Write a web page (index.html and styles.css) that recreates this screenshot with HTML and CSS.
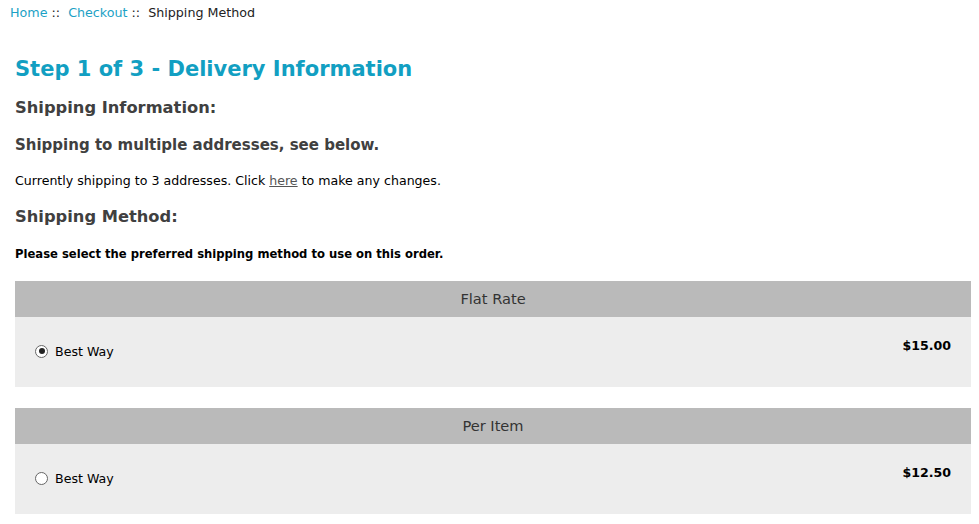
FILE: index.html
```html
<!DOCTYPE html>
<html>
<head>
<meta charset="utf-8">
<link rel="stylesheet" href="styles.css">
</head>
<body>
<div class="page">
  <div class="crumbs"><a href="#">Home</a>&nbsp;::&nbsp; <a href="#">Checkout</a>&nbsp;::&nbsp; Shipping Method</div>
  <h1 class="title">Step 1 of 3 - Delivery Information</h1>
  <h2 class="sub">Shipping Information:</h2>
  <h3 class="sub sub-small">Shipping to multiple addresses, see below.</h3>
  <p class="info">Currently shipping to 3 addresses. Click <a href="#" class="here">here</a> to make any changes.</p>
  <h2 class="sub sub-method">Shipping Method:</h2>
  <p class="note">Please select the preferred shipping method to use on this order.</p>

  <div class="panel">
    <div class="panel-head">Flat Rate</div>
    <div class="panel-body">
      <label class="opt"><span class="radio checked"></span>Best Way</label>
      <span class="price">$15.00</span>
    </div>
  </div>

  <div class="panel">
    <div class="panel-head">Per Item</div>
    <div class="panel-body">
      <label class="opt"><span class="radio"></span>Best Way</label>
      <span class="price">$12.50</span>
    </div>
  </div>
</div>
</body>
</html>
```
FILE: styles.css
```css
html, body {
  margin: 0;
  padding: 0;
  background: #fff;
}
body {
  font-family: "DejaVu Sans", Verdana, sans-serif;
  color: #000;
  font-size: 12.6px;
}
.page {
  padding: 0 8px 0 15px;
}
.crumbs {
  margin-left: -5px;
  padding-top: 5px;
  font-size: 12.7px;
  line-height: 16px;
  color: #222;
}
.crumbs a {
  color: #1ba1c5;
  text-decoration: none;
}
.title {
  margin: 34px 0 0;
  font-size: 21px;
  line-height: 28px;
  color: #129fc2;
  font-weight: bold;
}
.sub {
  margin: 12px 0 0;
  font-size: 16.3px;
  line-height: 26px;
  color: #404040;
  font-weight: bold;
}
.sub-small {
  margin-top: 11px;
  font-size: 15px;
}
.info {
  margin: 15px 0 0;
  font-size: 12.6px;
  line-height: 16px;
  color: #000;
}
.here {
  color: #555;
  text-decoration: underline;
}
.sub-method {
  margin-top: 15px;
}
.note {
  margin: 16px 0 0;
  font-size: 11.6px;
  line-height: 16px;
  font-weight: bold;
}
.panel {
  margin-top: 21px;
}
.note + .panel {
  margin-top: 19px;
}
.panel-head {
  height: 36px;
  line-height: 36px;
  background: #bababa;
  text-align: center;
  font-size: 14.6px;
  color: #333;
}
.panel-body {
  height: 70px;
  background: #ededed;
  display: flex;
  justify-content: space-between;
  padding: 0 20px 0 20px;
  box-sizing: border-box;
}
.opt {
  display: flex;
  align-items: center;
  margin-top: 26px;
  height: 16px;
  font-size: 12.6px;
}
.radio {
  width: 11px;
  height: 11px;
  border: 1px solid #666;
  border-radius: 50%;
  background: #fff;
  margin-right: 7px;
  box-sizing: content-box;
  display: inline-flex;
  align-items: center;
  justify-content: center;
}
.radio.checked::after {
  content: "";
  width: 6px;
  height: 6px;
  border-radius: 50%;
  background: #222;
}
.price {
  margin-top: 21px;
  font-weight: bold;
  font-size: 12.6px;
  line-height: 16px;
}
```
